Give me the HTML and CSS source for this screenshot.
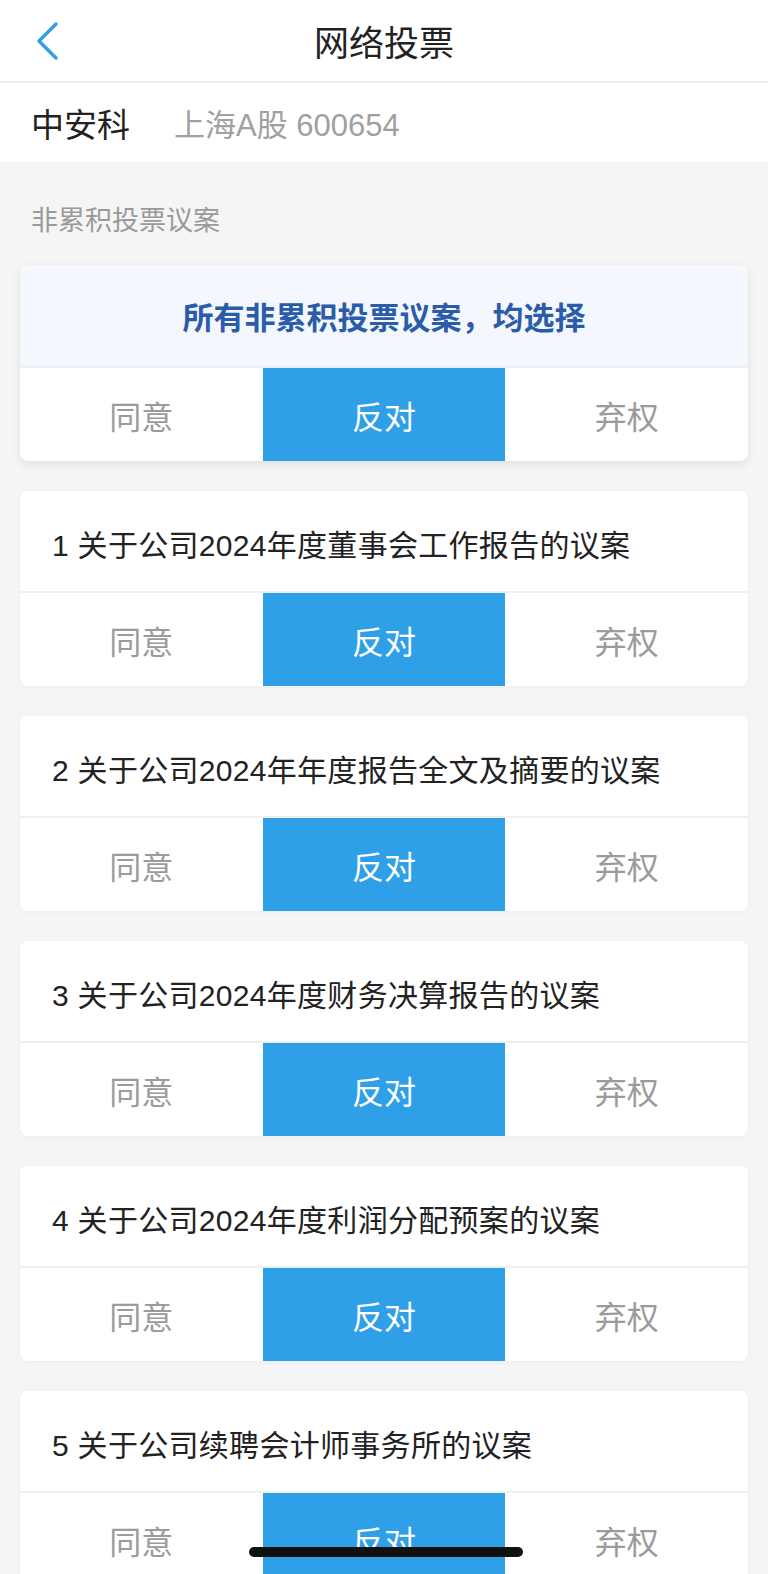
FILE: index.html
```html
<!DOCTYPE html>
<html lang="zh-CN">
<head>
  <meta charset="UTF-8" />
  <meta name="viewport" content="width=device-width, initial-scale=1.0"/>
  <title>网络投票</title>
  <link rel="stylesheet" href="styles.css">
</head>
<body>

  <header class="topbar">
    <a class="back" href="#">
      <svg width="26" height="40" viewBox="0 0 26 40">
        <path d="M21 3 L4 20 L21 37" fill="none" stroke="#2f9fe8" stroke-width="3.4" stroke-linecap="round" stroke-linejoin="round"/>
      </svg>
    </a>
    <h1 class="title">网络投票</h1>
    <span></span>
  </header>

  <div class="stock">
    <span class="stock-name">中安科</span>
    <span class="stock-code">上海A股 600654</span>
  </div>

  <main class="content">
    <p class="section-label">非累积投票议案</p>

    <!-- 全部选择 -->
    <div class="card card-all">
      <div class="card-head all-head">所有非累积投票议案，均选择</div>
      <div class="options">
        <span class="opt">同意</span>
        <span class="opt active">反对</span>
        <span class="opt">弃权</span>
      </div>
    </div>

    <div class="card">
      <div class="card-head">1 关于公司2024年度董事会工作报告的议案</div>
      <div class="options">
        <span class="opt">同意</span>
        <span class="opt active">反对</span>
        <span class="opt">弃权</span>
      </div>
    </div>

    <div class="card">
      <div class="card-head">2 关于公司2024年年度报告全文及摘要的议案</div>
      <div class="options">
        <span class="opt">同意</span>
        <span class="opt active">反对</span>
        <span class="opt">弃权</span>
      </div>
    </div>

    <div class="card">
      <div class="card-head">3 关于公司2024年度财务决算报告的议案</div>
      <div class="options">
        <span class="opt">同意</span>
        <span class="opt active">反对</span>
        <span class="opt">弃权</span>
      </div>
    </div>

    <div class="card">
      <div class="card-head">4 关于公司2024年度利润分配预案的议案</div>
      <div class="options">
        <span class="opt">同意</span>
        <span class="opt active">反对</span>
        <span class="opt">弃权</span>
      </div>
    </div>

    <div class="card">
      <div class="card-head">5 关于公司续聘会计师事务所的议案</div>
      <div class="options">
        <span class="opt">同意</span>
        <span class="opt active">反对</span>
        <span class="opt">弃权</span>
      </div>
    </div>
  </main>

  <div class="home-bar"></div>

</body>
</html>
```

FILE: styles.css
```css
/* RESET & BASE */
* {
  box-sizing: border-box;
  margin: 0;
  padding: 0;
}

html, body {
  height: 100%;
  overflow: hidden;
}

body {
  font-family: "Liberation Sans", "Noto Sans CJK SC", sans-serif;
  background: #f5f5f5;
  color: #222;
}

/* HEADER */
.topbar {
  height: 83px;
  background: #fff;
  border-bottom: 2px solid #ececec;
  display: grid;
  grid-template-columns: 120px 1fr 120px;
  align-items: center;
}

.back {
  display: flex;
  align-items: center;
  padding-left: 35px;
  height: 100%;
}

.title {
  text-align: center;
  font-size: 35px;
  font-weight: 400;
  color: #222;
}

/* STOCK ROW */
.stock {
  height: 79px;
  background: #fff;
  display: flex;
  align-items: center;
  gap: 44px;
  padding: 0 31px;
}

.stock-name {
  font-size: 33px;
  color: #222;
}

.stock-code {
  font-size: 31px;
  color: #a0a0a0;
}

/* LIST */
.content {
  padding: 41px 20px 0;
}

.section-label {
  font-size: 27px;
  line-height: 36px;
  color: #9a9a9a;
  padding-left: 11px;
  margin-bottom: 26px;
}

.card {
  background: #fff;
  border-radius: 8px;
  overflow: hidden;
  margin-bottom: 30px;
  box-shadow: 0 1px 4px rgba(0, 0, 0, 0.04);
}

.card-all {
  box-shadow: 0 3px 10px rgba(0, 0, 0, 0.09);
}

.card-head {
  height: 102px;
  display: flex;
  align-items: center;
  padding: 3px 32px 0;
  font-size: 30px;
  letter-spacing: 0.3px;
  border-bottom: 2px solid #efefef;
}

.all-head {
  height: 103px;
  padding-top: 0;
  justify-content: center;
  background: #f4f7fd;
  color: #2a5caa;
  font-size: 31px;
  font-weight: 700;
  letter-spacing: 0;
}

.options {
  display: grid;
  grid-template-columns: repeat(3, 1fr);
  height: 93px;
}

.opt {
  display: flex;
  align-items: center;
  justify-content: center;
  font-size: 32px;
  color: #9b9b9b;
}

.opt.active {
  background: #2f9fe8;
  color: #fff;
}

/* iOS home indicator */
.home-bar {
  position: fixed;
  left: 249px;
  bottom: 17px;
  width: 274px;
  height: 10px;
  border-radius: 5px;
  background: #111;
}
```
